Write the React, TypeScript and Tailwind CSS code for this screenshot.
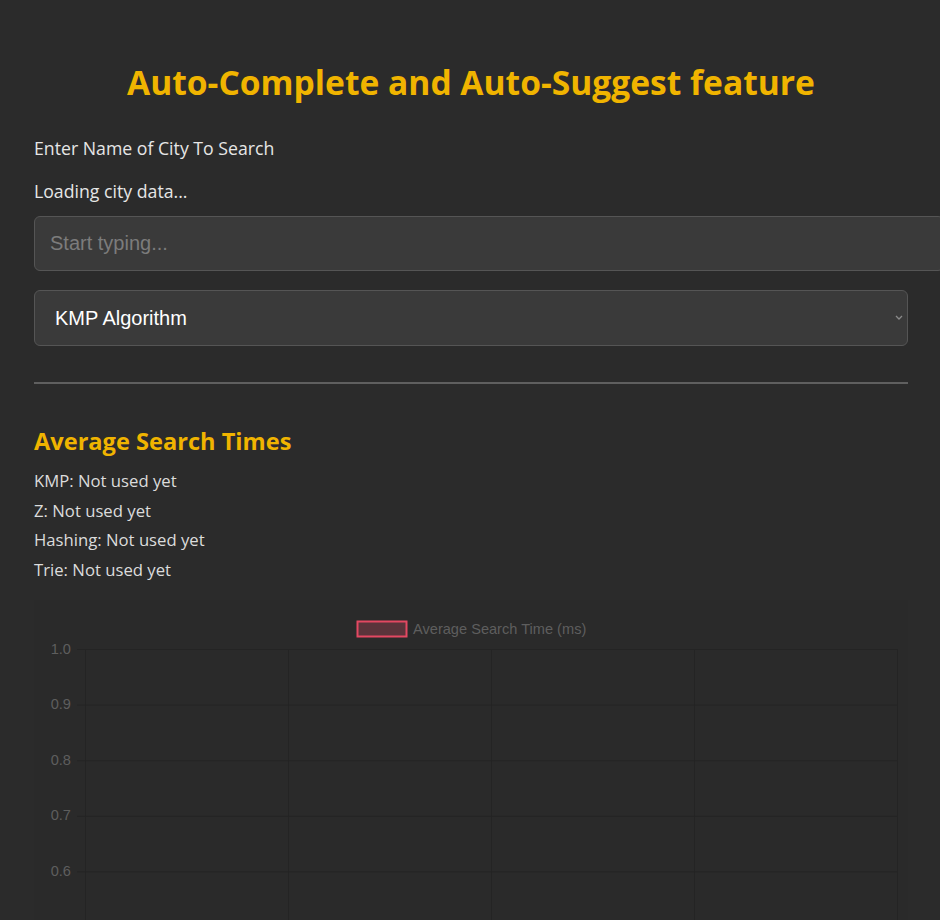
import { useState } from "react";

const ALGOS = [
  { value: "kmp", label: "KMP Algorithm" },
  { value: "z", label: "Z Algorithm" },
  { value: "hash", label: "Hashing" },
  { value: "trie", label: "Trie" },
];

const TIMES = ["KMP", "Z", "Hashing", "Trie"];

function Chart() {
  const left = 51;
  const right = 863;
  const top = 49;
  const step = 55.6;
  const ticks = ["1.0", "0.9", "0.8", "0.7", "0.6"];
  const cols = [51, 254, 457, 660, 863];

  return (
    <svg width="874" height="330" className="block" style={{ fontFamily: "'Liberation Sans', Arial, sans-serif" }}>
      <rect x="323.5" y="21.5" width="49" height="15" fill="#5a343b" stroke="#e34862" strokeWidth="2" />
      <text x="379" y="34" fontSize="14.6" fill="#5e5e5e">
        Average Search Time (ms)
      </text>
      {cols.map((x) => (
        <line key={x} x1={x + 0.5} y1={top} x2={x + 0.5} y2={330} stroke="#242424" />
      ))}
      {ticks.map((t, i) => {
        const y = top + i * step;
        return (
          <g key={t}>
            <line x1={left - 8} y1={y + 0.5} x2={right} y2={y + 0.5} stroke="#242424" />
            <text x="37" y={y + 4.5} fontSize="14.6" fill="#5e5e5e" textAnchor="end">
              {t}
            </text>
          </g>
        );
      })}
    </svg>
  );
}

export default function App() {
  const [query, setQuery] = useState("");
  const [algo, setAlgo] = useState("kmp");

  return (
    <div className="h-[920px] overflow-hidden bg-[#2b2b2b] font-['Open_Sans',sans-serif] text-[#e6e6e6]">
      <div className="ml-[34px] w-[874px]">
        <h1 className="mt-[62px] text-center text-[33.6px] font-bold leading-[40px] text-[#f0b400]">
          Auto-Complete and Auto-Suggest feature
        </h1>

        <p className="mt-[34px] text-[17.7px] leading-6">Enter Name of City To Search</p>
        <p className="mt-[19px] text-[17.7px] leading-6">Loading city data...</p>

        <input
          value={query}
          onChange={(e) => setQuery(e.target.value)}
          placeholder="Start typing..."
          className="mt-[13px] block h-[55px] w-[910px] rounded-md border border-[#555] bg-[#3a3a3a] px-[15px] font-['Liberation_Sans',Arial,sans-serif] text-[20px] text-white outline-none placeholder:text-[#7c7c7c]"
        />

        <div className="relative mt-[19px]">
          <select
            value={algo}
            onChange={(e) => setAlgo(e.target.value)}
            className="block h-[56px] w-full appearance-none rounded-md border border-[#555] bg-[#3a3a3a] pl-5 font-['Liberation_Sans',Arial,sans-serif] text-[20px] text-white outline-none"
          >
            {ALGOS.map((a) => (
              <option key={a.value} value={a.value}>
                {a.label}
              </option>
            ))}
          </select>
          <svg
            className="pointer-events-none absolute right-[5px] top-[25px]"
            width="8"
            height="5"
            viewBox="0 0 8 5"
          >
            <path d="M1 1l3 3 3-3" fill="none" stroke="#8a8a8a" strokeWidth="1.3" />
          </svg>
        </div>

        <div className="mt-[36px] h-[2px] bg-[#5f5f5f]" />

        <h2 className="mt-[41px] text-[23.6px] font-bold leading-8 text-[#f0b400]">Average Search Times</h2>
        <div className="mt-[9px] text-[16.7px] leading-[29.5px] text-[#dcdcdc]">
          {TIMES.map((t) => (
            <p key={t}>{t}: Not used yet</p>
          ))}
        </div>

        <div className="mt-4 bg-[#2a2a2a]">
          <Chart />
        </div>
      </div>
    </div>
  );
}
